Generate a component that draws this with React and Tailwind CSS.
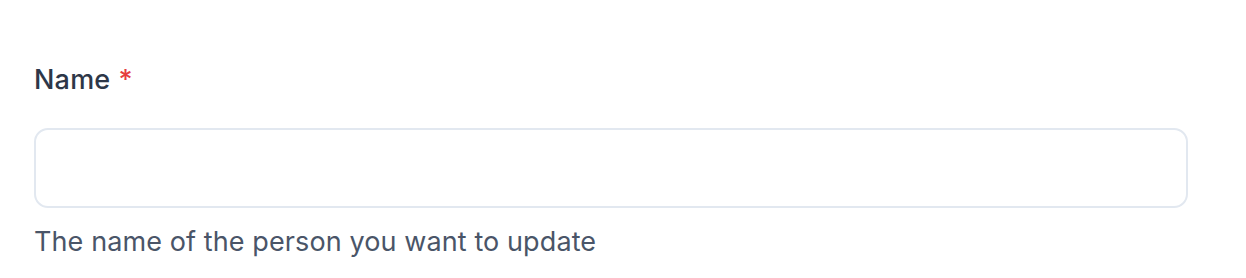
import React from 'react';

const App = () => {
  return (
    <div className="w-[1246px] h-[278px] bg-white pl-[34px] pr-[58px] pt-[60px]" style={{ fontFamily: 'Inter, "Noto Sans", sans-serif' }}>
      <label htmlFor="name" className="flex items-center text-[27px] leading-[40px] font-medium tracking-[0.2px] text-[#2d3748]">
        Name
        <span className="ml-[8px] text-[#e53e3e]">*</span>
      </label>
      <input
        id="name"
        type="text"
        className="mt-[28px] block w-full h-[80px] px-8 rounded-[14px] border-2 border-[#e2e8f0] bg-white text-[26px] outline-none"
      />
      <p className="mt-[14px] text-[27px] leading-[40px] tracking-[0.1px] text-[#4a5568]">The name of the person you want to update</p>
    </div>
  );
};

export default App;
